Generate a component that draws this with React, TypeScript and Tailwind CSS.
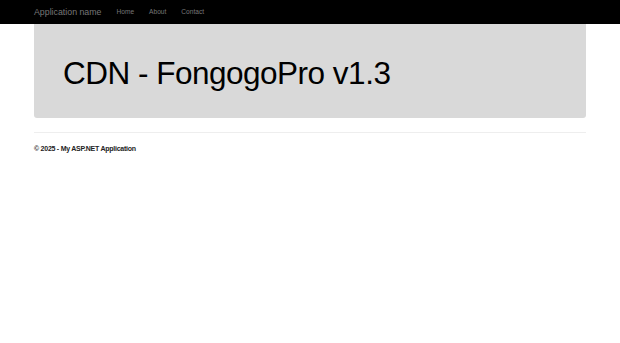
export default function App() {
  return (
    <div className="min-h-[343px] bg-white font-['Liberation_Sans',Arial,sans-serif] text-[#333]">
      {/* Navbar */}
      <header className="h-[24px] bg-black">
        <div className="mx-auto flex h-full w-[552px] items-center">
          <a href="#" className="text-[8.8px] leading-none text-[#777]">
            Application name
          </a>
          <nav className="ml-[15px] flex items-center gap-[15px] text-[6.6px] leading-none text-[#777]">
            <a href="#">Home</a>
            <a href="#">About</a>
            <a href="#">Contact</a>
          </nav>
        </div>
      </header>

      <div className="mx-auto w-[552px]">
        {/* Jumbotron */}
        <div className="flex h-[94px] items-center rounded-b-[3px] bg-[#d9d9d9] pl-[29px]">
          <h1 className="mt-[5px] text-[31.5px] leading-none tracking-[-0.5px] text-black">CDN - FongogoPro v1.3</h1>
        </div>

        <hr className="mt-[14px] border-t border-[#eee]" />

        <footer className="mt-[12px]">
          <p className="text-[7px] font-bold leading-none tracking-[-0.25px] text-[#222]">© 2025 - My ASP.NET Application</p>
        </footer>
      </div>
    </div>
  )
}
